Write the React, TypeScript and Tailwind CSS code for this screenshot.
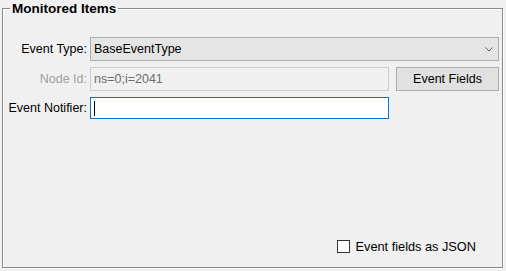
import { FC } from 'react';

const FONT = "font-['Liberation_Sans',Arial,sans-serif]";

const ChevronDown: FC = () => (
  <svg width="8" height="5" viewBox="0 0 8 5" className="shrink-0">
    <polyline points="0.5,0.5 4,4 7.5,0.5" fill="none" stroke="#606060" strokeWidth="1" />
  </svg>
);

const App: FC = () => {
  return (
    <div
      className={`w-[506px] h-[271px] bg-[#f0f0f0] pt-px pl-[2px] pr-[3px] pb-[3px] text-black ${FONT}`}
    >
      <fieldset className="h-full border border-[#8a8a8a] shadow-[inset_1px_1px_0_#ffffff,1px_1px_0_#ffffff]">
        <legend className="ml-[7px] px-[2px] text-[13.5px] font-bold leading-[15px]">
          Monitored Items
        </legend>

        <div className="flex flex-col pt-[21px] text-[12.5px] leading-[15px]">
          {/* event type */}
          <div className="flex items-center">
            <label className="w-[84px] text-right">Event Type:</label>
            <div className="ml-[3px] flex h-[24px] w-[409px] items-center justify-between border border-[#adadad] bg-[#e5e5e5] pl-[3px] pr-[5px]">
              <span>BaseEventType</span>
              <ChevronDown />
            </div>
          </div>

          {/* node id */}
          <div className="mt-[6px] flex items-center">
            <label className="w-[84px] text-right text-[#a0a0a0]">Node Id:</label>
            <div className="ml-[3px] flex h-[24px] w-[299px] items-center border border-[#cccccc] bg-[#f0f0f0] pl-[3px] text-[#6d6d6d]">
              ns=0;i=2041
            </div>
            <button className="ml-[7px] h-[24px] w-[103px] border border-[#adadad] bg-[#e1e1e1] text-center">
              Event Fields
            </button>
          </div>

          {/* event notifier */}
          <div className="mt-[6px] flex items-center">
            <label className="w-[84px] text-right">Event Notifier:</label>
            <div className="ml-[3px] flex h-[22px] w-[299px] items-center border border-[#0078d7] bg-white pl-[3px]">
              <span className="h-[15px] w-px bg-black" />
            </div>
          </div>

          {/* json checkbox */}
          <div className="mt-[120px] flex items-center justify-end pr-[26px] text-[12.75px]">
            <span className="h-[13px] w-[13px] border border-[#333333] bg-white" />
            <span className="ml-[6px]">Event fields as JSON</span>
          </div>
        </div>
      </fieldset>
    </div>
  );
};

export default App;
